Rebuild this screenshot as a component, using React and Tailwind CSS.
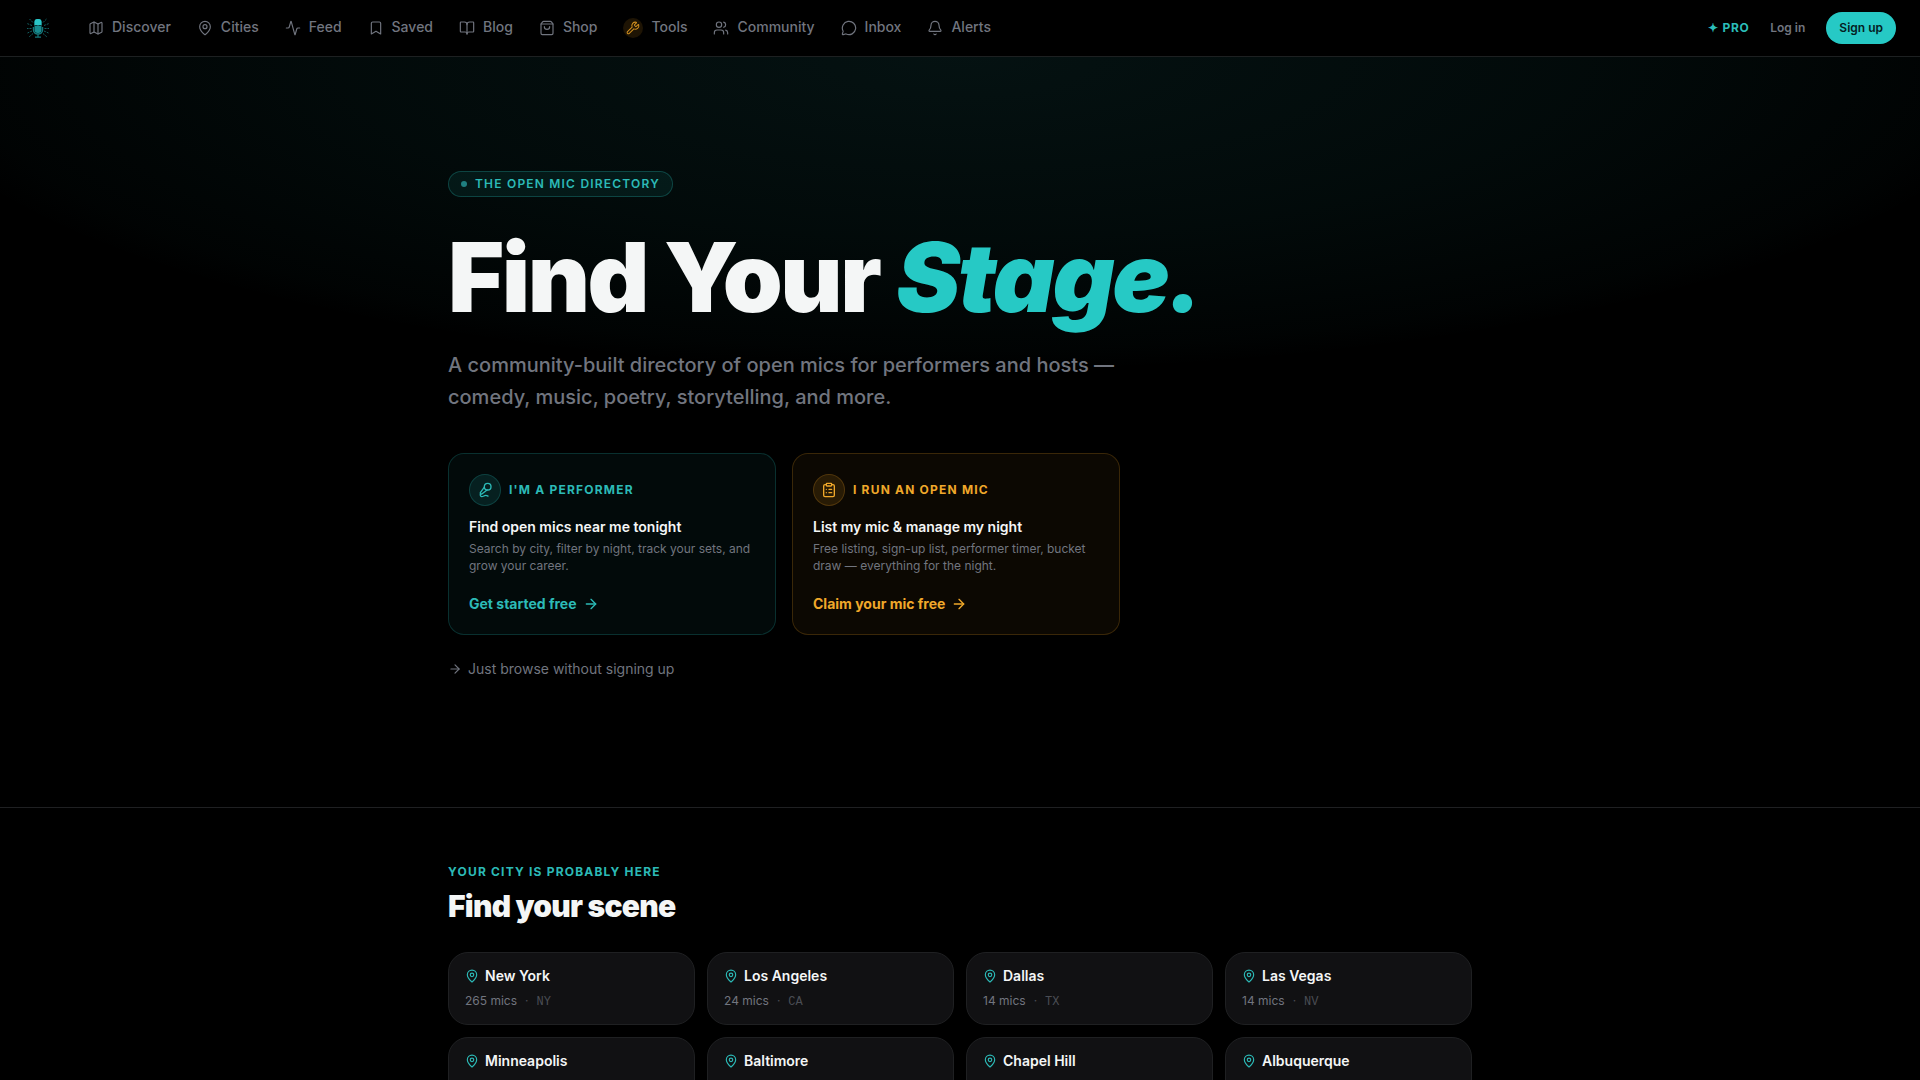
import {
  ArrowRight,
  Bell,
  BookOpen,
  Bookmark,
  Activity,
  ClipboardList,
  Map,
  MapPin,
  MessageCircle,
  MicVocal,
  ShoppingBag,
  Users,
  Wrench,
} from "lucide-react"

const navItems = [
  { href: "#discover", label: "Discover", icon: Map },
  { href: "#cities", label: "Cities", icon: MapPin },
  { href: "#feed", label: "Feed", icon: Activity },
  { href: "#saved", label: "Saved", icon: Bookmark },
  { href: "#blog", label: "Blog", icon: BookOpen },
  { href: "#shop", label: "Shop", icon: ShoppingBag },
  { href: "#tools", label: "Tools", icon: Wrench, highlight: true },
  { href: "#community", label: "Community", icon: Users },
  { href: "#inbox", label: "Inbox", icon: MessageCircle },
  { href: "#alerts", label: "Alerts", icon: Bell },
]

const cities = [
  { name: "New York", mics: 265, state: "NY" },
  { name: "Los Angeles", mics: 24, state: "CA" },
  { name: "Dallas", mics: 14, state: "TX" },
  { name: "Las Vegas", mics: 14, state: "NV" },
  { name: "Minneapolis", mics: 12, state: "MN" },
  { name: "Baltimore", mics: 11, state: "MD" },
  { name: "Chapel Hill", mics: 10, state: "NC" },
  { name: "Albuquerque", mics: 9, state: "NM" },
]

function Logo() {
  return (
    <svg viewBox="0 0 28 28" className="w-7 h-7" aria-hidden="true">
      <g stroke="#125f61" strokeWidth="1" strokeDasharray="2 1" fill="none">
        <path d="M9 8.500 5.500 5M8 11.500 3 9.500M7.500 14.500H3M8 17l-4.500 2M9 19.500 5 23" />
        <path d="M19 8.500 22.500 5M20 11.500l5-2M20.500 14.500H25M20 17l4.500 2M19 19.500l4 3.500" />
      </g>
      <rect x="10.500" y="5" width="7" height="14" rx="3" fill="#178b8f" />
      <path d="M10.500 11V8a3 3 0 0 1 3-3h1a3 3 0 0 1 3 3v3z" fill="#2ac6c8" />
      <path d="M11 11.500h2.500M14.500 11.500H17" stroke="#073b3e" />
      <path d="M9.500 13v3a4.500 4 0 0 0 9 0v-3" fill="none" stroke="#14777a" strokeWidth="1.500" />
      <path d="M14 20v3M11 23h6" stroke="#14777a" strokeWidth="1.250" />
    </svg>
  )
}

function Navbar() {
  return (
    <header className="border-b border-[#1d2021] bg-black">
      <div className="flex items-center justify-between h-14 px-6">
        <div className="flex items-center gap-9">
          <a href="#home" aria-label="Home">
            <Logo />
          </a>
          <nav className="flex items-center gap-[26px]">
            {navItems.map((item) => (
              <a key={item.href} href={item.href} className="flex items-center gap-2 text-sm font-medium text-[#71757f]">
                {item.highlight ? (
                  <span className="flex items-center justify-center w-5 h-5 rounded-full bg-[#f5a623]/12 text-[#d18f1f]">
                    <item.icon size={14} strokeWidth={1.75} />
                  </span>
                ) : (
                  <item.icon size={16} strokeWidth={1.75} />
                )}
                <span className="pb-0.5">{item.label}</span>
              </a>
            ))}
          </nav>
        </div>

        <div className="flex items-center gap-[21px] text-xs font-semibold">
          <a href="#pro" className="font-bold tracking-wider text-[#2bbdb9]">✦ PRO</a>
          <a href="#login" className="text-[#71757f]">Log in</a>
          <button type="button" className="h-8 px-[13px] rounded-full bg-[#26c9c5] text-[#04201f]">
            Sign up
          </button>
        </div>
      </div>
    </header>
  )
}

function Hero() {
  return (
    <section className="border-b border-[#1f2022] bg-[radial-gradient(ellipse_80%_60%_at_50%_0%,rgba(50,195,195,0.09),rgba(38,201,197,0.05)_40%,rgba(38,201,197,0.015)_65%,transparent_70%)]">
      <div className="max-w-5xl mx-auto pt-[114px] pb-32">
        <p className="flex items-center gap-2 w-fit px-3 h-[26px] rounded-full border border-[#26c9c5]/25 bg-[#26c9c5]/8 text-xs font-semibold tracking-widest uppercase text-[#2cbab7]">
          <span className="w-1.5 h-1.5 rounded-full bg-[#1f7f80]" />
          The open mic directory
        </p>

        <h1 className="mt-8 text-8xl leading-[96px] font-black tracking-tight text-[#f4f6f6]">
          Find Your <em className="text-[#26c9c5]">Stage.</em>
        </h1>

        <p className="mt-6 max-w-2xl text-xl leading-8 font-medium text-[#71757f]">
          A community-built directory of open mics for performers and hosts — comedy, music, poetry, storytelling, and more.
        </p>

        <div className="grid grid-cols-2 gap-4 max-w-2xl mt-10">
          <a href="#signup" className="p-5 rounded-2xl border border-[#26c9c5]/20 bg-[#26c9c5]/5">
            <div className="flex items-center gap-2 text-[#2cbab7]">
              <span className="flex items-center justify-center w-8 h-8 rounded-full border border-[#26c9c5]/20 bg-[#26c9c5]/12">
                <MicVocal size={16} strokeWidth={2} />
              </span>
              <span className="text-xs font-bold tracking-widest uppercase">I'm a performer</span>
            </div>
            <h2 className="mt-[11px] text-sm font-semibold text-[#f4f6f6]">Find open mics near me tonight</h2>
            <p className="mt-[3px] text-xs leading-[17px] text-[#71757f]">
              Search by city, filter by night, track your sets, and grow your career.
            </p>
            <span className="flex items-center gap-1.5 mt-5 text-sm font-bold text-[#2cbab7]">
              Get started free
              <ArrowRight size={16} />
            </span>
          </a>

          <a href="#claim" className="p-5 rounded-2xl border border-[#f5a623]/20 bg-[#f5a623]/5">
            <div className="flex items-center gap-2 text-[#f0a82a]">
              <span className="flex items-center justify-center w-8 h-8 rounded-full border border-[#f5a623]/20 bg-[#f5a623]/12">
                <ClipboardList size={16} strokeWidth={2} />
              </span>
              <span className="text-xs font-bold tracking-widest uppercase">I run an open mic</span>
            </div>
            <h2 className="mt-[11px] text-sm font-semibold text-[#f4f6f6]">List my mic &amp; manage my night</h2>
            <p className="mt-[3px] text-xs leading-[17px] text-[#71757f]">
              Free listing, sign-up list, performer timer, bucket draw — everything for the night.
            </p>
            <span className="flex items-center gap-1.5 mt-5 text-sm font-bold text-[#f0a82a]">
              Claim your mic free
              <ArrowRight size={16} />
            </span>
          </a>
        </div>

        <a href="#browse" className="flex items-center gap-1.5 w-fit mt-6 text-sm text-[#71757f]">
          <ArrowRight size={14} />
          Just browse without signing up
        </a>
      </div>
    </section>
  )
}

function Cities() {
  return (
    <section className="max-w-5xl mx-auto pt-14 pb-16">
      <p className="text-xs font-bold tracking-widest uppercase text-[#2cbab7]">Your city is probably here</p>
      <h2 className="mt-2 text-3xl font-black tracking-tight text-[#f4f6f6]">Find your scene</h2>

      <div className="grid grid-cols-4 gap-3 mt-7">
        {cities.map((city) => (
          <a key={city.name} href="#city" className="px-4 py-3.5 rounded-[20px] border border-[#1f2022] bg-[#111113]">
            <div className="flex items-center gap-1.5">
              <MapPin size={14} className="text-[#2cbab7]" />
              <span className="text-sm leading-[18px] font-semibold text-[#f4f6f6]">{city.name}</span>
            </div>
            <div className="flex items-baseline gap-2 mt-2 text-xs text-[#71757f]">
              <span>{city.mics} mics</span>
              <span className="text-[#4a4d54]">·</span>
              <span className="font-mono text-[#4a4d54]">{city.state}</span>
            </div>
          </a>
        ))}
      </div>
    </section>
  )
}

export default function App() {
  return (
    <div className="min-h-screen bg-black font-['Inter',sans-serif]">
      <Navbar />
      <main>
        <Hero />
        <Cities />
      </main>
    </div>
  )
}
